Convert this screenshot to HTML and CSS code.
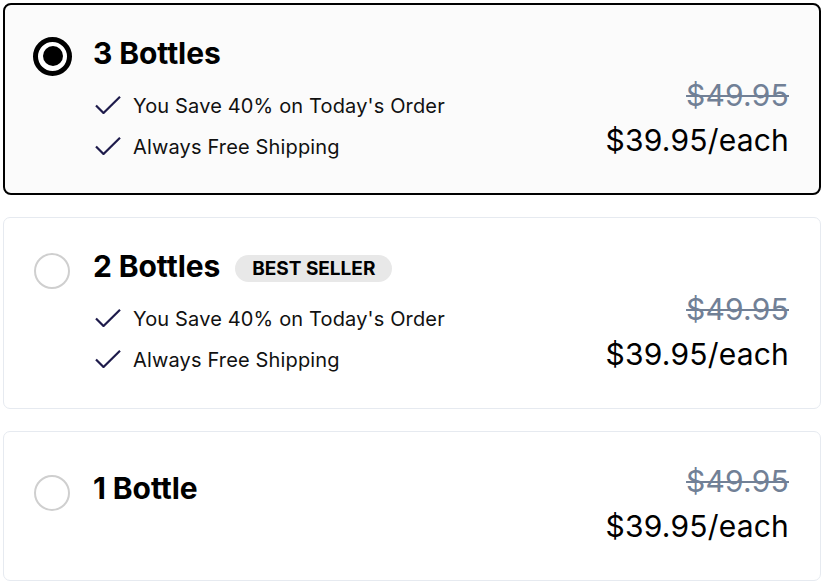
FILE: index.html
```html
<!DOCTYPE html>
<html lang="en">
<head>
<meta charset="utf-8">
<title>Bundle options</title>
<link rel="stylesheet" href="styles.css">
</head>
<body>
<div class="options">
  <div class="card selected">
    <div class="left">
      <div class="title-row">
        <span class="radio checked"><span class="dot"></span></span>
        <span class="title">3 Bottles</span>
      </div>
      <ul class="features">
        <li><svg class="check" viewBox="0 0 28 18" width="28" height="18"><path d="M3 9.5 L10.5 17 L27 0.8" fill="none" stroke="#1e1b4b" stroke-width="2.2"/></svg>You Save 40% on Today's Order</li>
        <li><svg class="check" viewBox="0 0 28 18" width="28" height="18"><path d="M3 9.5 L10.5 17 L27 0.8" fill="none" stroke="#1e1b4b" stroke-width="2.2"/></svg>Always Free Shipping</li>
      </ul>
    </div>
    <div class="price">
      <div class="old">$49.95</div>
      <div class="now">$39.95/each</div>
    </div>
  </div>

  <div class="card">
    <div class="left">
      <div class="title-row">
        <span class="radio"></span>
        <span class="title">2 Bottles</span>
        <span class="badge">BEST SELLER</span>
      </div>
      <ul class="features">
        <li><svg class="check" viewBox="0 0 28 18" width="28" height="18"><path d="M3 9.5 L10.5 17 L27 0.8" fill="none" stroke="#1e1b4b" stroke-width="2.2"/></svg>You Save 40% on Today's Order</li>
        <li><svg class="check" viewBox="0 0 28 18" width="28" height="18"><path d="M3 9.5 L10.5 17 L27 0.8" fill="none" stroke="#1e1b4b" stroke-width="2.2"/></svg>Always Free Shipping</li>
      </ul>
    </div>
    <div class="price">
      <div class="old">$49.95</div>
      <div class="now">$39.95/each</div>
    </div>
  </div>

  <div class="card single">
    <div class="left">
      <div class="title-row">
        <span class="radio"></span>
        <span class="title">1 Bottle</span>
      </div>
    </div>
    <div class="price">
      <div class="old">$49.95</div>
      <div class="now">$39.95/each</div>
    </div>
  </div>
</div>
</body>
</html>
```

FILE: styles.css
```css
* { box-sizing: border-box; }
html, body { margin: 0; padding: 0; background: #fff; }
body {
  font-family: Inter, "Noto Sans", sans-serif;
  color: #0a0a0a;
}
.options {
  padding: 3px;
  display: flex;
  flex-direction: column;
  gap: 22px;
}
.card {
  display: flex;
  justify-content: space-between;
  align-items: flex-end;
  border: 1px solid #e6eaf0;
  border-radius: 7px;
  background: #fff;
  padding: 28px 31px 30px 28px;
  min-height: 192px;
}
.card.selected {
  border: 2px solid #000;
  border-radius: 8px;
  background: #fbfbfb;
  padding: 28px 30px 29px 27px;
}
.card.single {
  min-height: 150px;
}
.left {
  align-self: flex-start;
}
.card.single .left {
  margin-top: 8px;
}
.title-row {
  display: flex;
  align-items: center;
  height: 40px;
}
.radio {
  flex: none;
  width: 36px;
  height: 36px;
  margin: 0 23px 0 2px;
  border: 2px solid #cfcfcf;
  border-radius: 50%;
  align-self: flex-end;
  margin-bottom: -2.5px;
  display: flex;
  align-items: center;
  justify-content: center;
}
.radio.checked {
  width: 39px;
  height: 39px;
  margin: 0 21px 0 1px;
  margin-bottom: -2.5px;
  border: 5px solid #000;
  background: #fff;
}
.dot {
  width: 20px;
  height: 20px;
  border-radius: 50%;
  background: #000;
}
.title {
  font-size: 30px;
  font-weight: 700;
  line-height: 40px;
  letter-spacing: -0.1px;
  color: #000;
}
.badge {
  margin-left: 15px;
  margin-top: 5px;
  background: #e8e8e8;
  border-radius: 14px;
  height: 27px;
  padding: 0 17px;
  display: flex;
  align-items: center;
  font-size: 19px;
  font-weight: 700;
  letter-spacing: 0;
  color: #000;
}
.features {
  list-style: none;
  margin: 18px 0 0 61px;
  padding: 0;
  display: flex;
  flex-direction: column;
  gap: 11px;
}
.features li {
  display: flex;
  align-items: center;
  font-size: 20px;
  line-height: 30px;
  letter-spacing: 0.15px;
  color: #111;
}
.check {
  flex: none;
  margin-right: 12px;
  margin-top: -2px;
}
.price {
  text-align: right;
  margin-bottom: 7px;
}
.old {
  font-size: 30px;
  line-height: 34px;
  letter-spacing: 0.2px;
  color: #718096;
  text-decoration: line-through;
  text-decoration-thickness: 2px;
}
.now {
  margin-top: 11px;
  font-size: 30px;
  line-height: 34px;
  letter-spacing: 0.2px;
  color: #000;
}
```
